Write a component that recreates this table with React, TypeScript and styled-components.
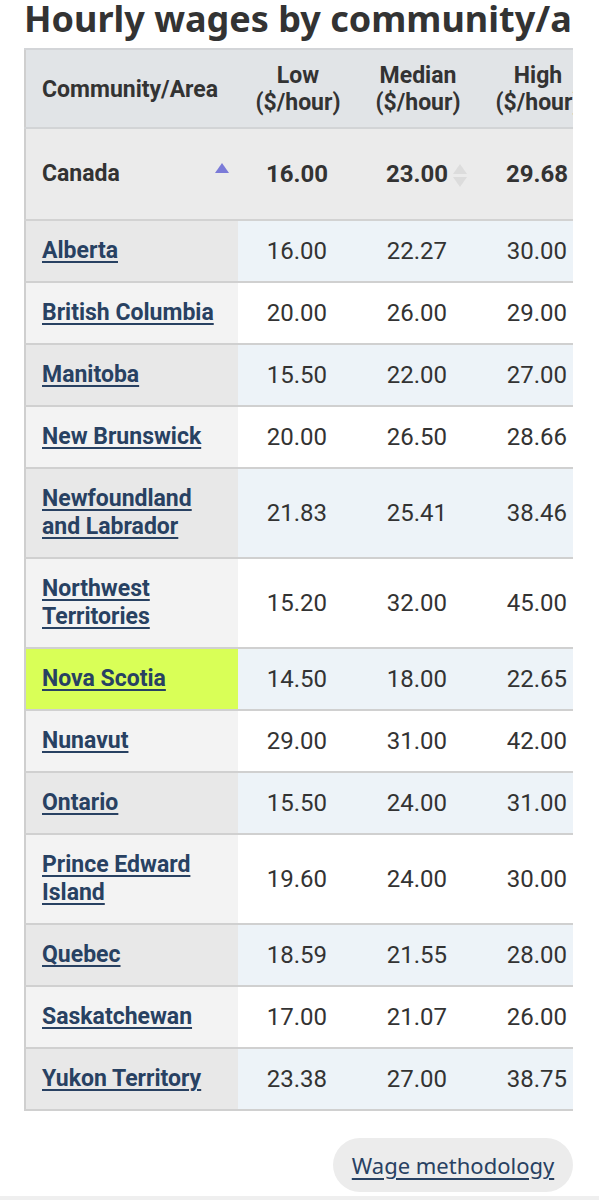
import { createGlobalStyle, styled } from 'styled-components';

const GlobalStyle = createGlobalStyle`
  html, body {
    margin: 0;
    padding: 0;
    background: #fff;
  }
  body {
    font-family: Roboto, "Liberation Sans", sans-serif;
    color: #333;
  }
`;

type Row = { name: string; low: string; median: string; high: string; highlight?: boolean };

const rows: Row[] = [
  { name: 'Alberta', low: '16.00', median: '22.27', high: '30.00' },
  { name: 'British Columbia', low: '20.00', median: '26.00', high: '29.00' },
  { name: 'Manitoba', low: '15.50', median: '22.00', high: '27.00' },
  { name: 'New Brunswick', low: '20.00', median: '26.50', high: '28.66' },
  { name: 'Newfoundland and Labrador', low: '21.83', median: '25.41', high: '38.46' },
  { name: 'Northwest Territories', low: '15.20', median: '32.00', high: '45.00' },
  { name: 'Nova Scotia', low: '14.50', median: '18.00', high: '22.65', highlight: true },
  { name: 'Nunavut', low: '29.00', median: '31.00', high: '42.00' },
  { name: 'Ontario', low: '15.50', median: '24.00', high: '31.00' },
  { name: 'Prince Edward Island', low: '19.60', median: '24.00', high: '30.00' },
  { name: 'Quebec', low: '18.59', median: '21.55', high: '28.00' },
  { name: 'Saskatchewan', low: '17.00', median: '21.07', high: '26.00' },
  { name: 'Yukon Territory', low: '23.38', median: '27.00', high: '38.75' },
];

const App = () => (
  <>
    <GlobalStyle />
    <Page>
      <Content>
        <Title>Hourly wages by community/area</Title>
        <Table>
          <colgroup>
            <col style={{ width: 213 }} />
            <col style={{ width: 120 }} />
            <col style={{ width: 120 }} />
            <col style={{ width: 120 }} />
          </colgroup>
          <thead>
            <HeadRow>
              <HeadCell $align="left">Community/Area</HeadCell>
              <HeadCell>
                Low
                <br />
                ($/hour)
              </HeadCell>
              <HeadCell>
                Median
                <br />
                ($/hour)
              </HeadCell>
              <HeadCell>
                High
                <br />
                ($/hour)
              </HeadCell>
            </HeadRow>
            <SummaryRow>
              <SummaryName>
                Canada
                <SortAsc />
              </SummaryName>
              <SummaryValue>16.00</SummaryValue>
              <SummaryValue>
                23.00
                <SortBoth>
                  <ArrowUp />
                  <ArrowDown />
                </SortBoth>
              </SummaryValue>
              <SummaryValue>29.68</SummaryValue>
            </SummaryRow>
          </thead>
          <tbody>
            {rows.map((row, i) => (
              <BodyRow key={row.name}>
                <NameCell $odd={i % 2 === 0} $highlight={row.highlight}>
                  <AreaLink href="#">{row.name}</AreaLink>
                </NameCell>
                <ValueCell $odd={i % 2 === 0}>{row.low}</ValueCell>
                <ValueCell $odd={i % 2 === 0}>{row.median}</ValueCell>
                <ValueCell $odd={i % 2 === 0}>{row.high}</ValueCell>
              </BodyRow>
            ))}
          </tbody>
        </Table>
        <Actions>
          <MethodButton href="#">Wage methodology</MethodButton>
        </Actions>
      </Content>
      <BottomStrip />
    </Page>
  </>
);

export default App;

const Page = styled.div`
  width: 599px;
  min-height: 1200px;
  display: flex;
  flex-direction: column;
`;

const Content = styled.div`
  width: 549px;
  margin-left: 24px;
  overflow: hidden;
`;

const Title = styled.h2`
  margin: -5px 0 6px;
  font-family: "Noto Sans", "Open Sans", sans-serif;
  font-size: 36px;
  font-weight: 700;
  line-height: 47px;
  white-space: nowrap;
  color: #333;
`;

const Table = styled.table`
  width: 573px;
  table-layout: fixed;
  border-collapse: collapse;
  border-top: 2px solid #d3d5d8;
  border-left: 2px solid #cfcfcf;
  font-family: Roboto, "Liberation Sans", sans-serif;
`;

const HeadRow = styled.tr`
  background: #e1e4e7;
  border-bottom: 2px solid #d2d4d6;
`;

const HeadCell = styled.th<{ $align?: 'left' | 'center' }>`
  padding: 12px 0 11px;
  padding-left: ${({ $align }) => ($align === 'left' ? '16px' : '0')};
  text-align: ${({ $align }) => $align ?? 'center'};
  vertical-align: middle;
  font-size: 23px;
  font-weight: 700;
  line-height: 27px;
  color: #333;
  white-space: nowrap;
`;

const SummaryRow = styled.tr`
  background: #ebebeb;
  border-bottom: 2px solid #d2d2d2;
`;

const SummaryName = styled.th`
  position: relative;
  padding: 31px 0 31px 16px;
  text-align: left;
  font-size: 23px;
  font-weight: 700;
  line-height: 28px;
  color: #333;
`;

const SummaryValue = styled.th`
  position: relative;
  padding: 31px 30px 31px 0;
  text-align: right;
  font-size: 24px;
  font-weight: 700;
  line-height: 28px;
  color: #333;
`;

const SortAsc = styled.span`
  position: absolute;
  right: 9px;
  top: 34px;
  width: 0;
  height: 0;
  border-left: 7px solid transparent;
  border-right: 7px solid transparent;
  border-bottom: 10px solid #7b7bd8;
`;

const SortBoth = styled.span`
  position: absolute;
  right: 11px;
  top: 35px;
  display: flex;
  flex-direction: column;
  gap: 3px;
`;

const ArrowUp = styled.span`
  width: 0;
  height: 0;
  border-left: 7px solid transparent;
  border-right: 7px solid transparent;
  border-bottom: 10px solid #dcdcdc;
`;

const ArrowDown = styled.span`
  width: 0;
  height: 0;
  border-left: 7px solid transparent;
  border-right: 7px solid transparent;
  border-top: 10px solid #dcdcdc;
`;

const BodyRow = styled.tr`
  border-bottom: 2px solid #d0d0d0;
`;

const NameCell = styled.td<{ $odd: boolean; $highlight?: boolean }>`
  padding: 16px 10px 16px 16px;
  vertical-align: middle;
  font-size: 23px;
  line-height: 28px;
  background: ${({ $odd, $highlight }) => ($highlight ? '#d9ff57' : $odd ? '#e8e8e8' : '#f3f3f3')};
`;

const AreaLink = styled.a`
  font-weight: 700;
  color: #284162;
  text-decoration: underline;
  text-decoration-thickness: 2px;
  text-underline-offset: 3px;
`;

const ValueCell = styled.td<{ $odd: boolean }>`
  padding: 16px 31px 16px 0;
  text-align: right;
  vertical-align: middle;
  font-size: 24px;
  line-height: 28px;
  color: #333;
  background: ${({ $odd }) => ($odd ? '#edf3f8' : '#ffffff')};
`;

const Actions = styled.div`
  display: flex;
  justify-content: flex-end;
  padding: 27px 0 0;
`;

const MethodButton = styled.a`
  display: inline-flex;
  align-items: center;
  justify-content: center;
  width: 240px;
  height: 54px;
  border-radius: 27px;
  background: #ececec;
  font-family: "Noto Sans", "Open Sans", sans-serif;
  font-size: 22px;
  color: #284162;
  text-decoration: underline;
  text-underline-offset: 4px;
`;

const BottomStrip = styled.div`
  margin-top: auto;
  height: 4px;
  background: #efefef;
`;
